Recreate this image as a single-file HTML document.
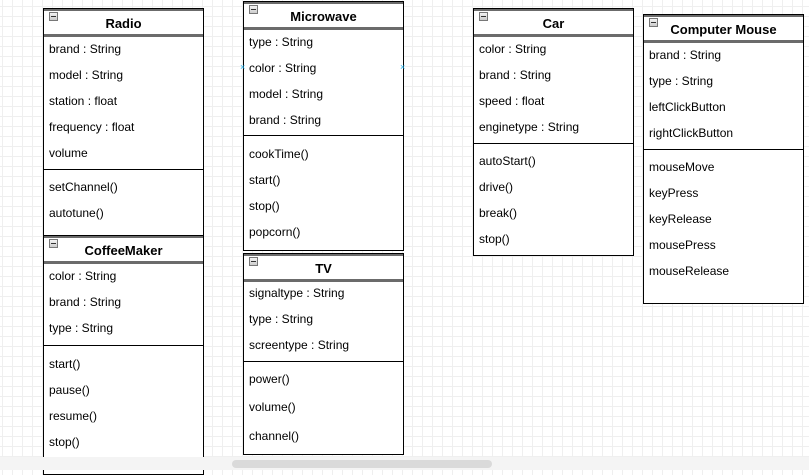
<!DOCTYPE html>
<html><head><style>
body{margin:0;width:809px;height:470px;overflow:hidden;position:relative;font-family:"Liberation Sans",Arial,sans-serif;
background-color:#fff;
background-image:linear-gradient(#efefef 1px,transparent 1px),linear-gradient(90deg,#efefef 1px,transparent 1px);
background-size:10px 10px;background-position:2px 6px;}
.b{position:absolute;background:#fff;border:1px solid #000;box-sizing:border-box}
.h{position:absolute;left:0;right:0;top:0;border-top:2px solid #6b6b6b;border-bottom:3px solid #6b6b6b;box-sizing:border-box;text-align:center;font-weight:bold;font-size:13px}
.m{position:absolute;left:5px;top:3px;width:7px;height:7px;border:1px solid #777;background:linear-gradient(#f4f4f4,#ccc)}
.m:after{content:"";position:absolute;left:1px;right:1px;top:3px;height:1px;background:#333}
.t{position:absolute;left:5px;font-size:12px;line-height:14px;color:#000;transform:translateY(-7px);white-space:nowrap}
.s{position:absolute;left:0;right:0;height:0;border-top:1px solid #000}
#sb{position:absolute;left:0;top:457px;width:809px;height:13px;background:#f4f4f4;z-index:10}
#th{position:absolute;left:232px;top:460px;width:260px;height:8px;border-radius:4px;background:#dadada;z-index:11}
.x{position:absolute;color:#29b6f2;font-size:9px;line-height:9px}
</style></head><body>

<div class="b" style="left:43px;top:8px;width:161px;height:230px">
<div class="h" style="height:28px;line-height:26px">Radio</div><div class="m"></div>
<div class="t" style="top:40px">brand : String</div>
<div class="t" style="top:66px">model : String</div>
<div class="t" style="top:92px">station : float</div>
<div class="t" style="top:118px">frequency : float</div>
<div class="t" style="top:144px">volume</div>
<div class="s" style="top:160px"></div>
<div class="t" style="top:178px">setChannel()</div>
<div class="t" style="top:204px">autotune()</div>
</div>

<div class="b" style="left:43px;top:235px;width:161px;height:240px">
<div class="h" style="height:28px;line-height:26px">CoffeeMaker</div><div class="m"></div>
<div class="t" style="top:40px">color : String</div>
<div class="t" style="top:66px">brand : String</div>
<div class="t" style="top:92px">type : String</div>
<div class="s" style="top:109px"></div>
<div class="t" style="top:128px">start()</div>
<div class="t" style="top:154px">pause()</div>
<div class="t" style="top:180px">resume()</div>
<div class="t" style="top:206px">stop()</div>
</div>

<div class="b" style="left:243px;top:1px;width:161px;height:250px">
<div class="h" style="height:28px;line-height:26px">Microwave</div><div class="m"></div>
<div class="t" style="top:40px">type : String</div>
<div class="t" style="top:66px">color : String</div>
<div class="t" style="top:92px">model : String</div>
<div class="t" style="top:118px">brand : String</div>
<div class="s" style="top:133px"></div>
<div class="t" style="top:152px">cookTime()</div>
<div class="t" style="top:178px">start()</div>
<div class="t" style="top:204px">stop()</div>
<div class="t" style="top:230px">popcorn()</div>
</div>
<div class="x" style="left:240px;top:63px">×</div>
<div class="x" style="left:400px;top:63px">×</div>

<div class="b" style="left:243px;top:253px;width:161px;height:202px">
<div class="h" style="height:28px;line-height:26px">TV</div><div class="m"></div>
<div class="t" style="top:39px">signaltype : String</div>
<div class="t" style="top:65px">type : String</div>
<div class="t" style="top:91px">screentype : String</div>
<div class="s" style="top:107px"></div>
<div class="t" style="top:125px">power()</div>
<div class="t" style="top:153px">volume()</div>
<div class="t" style="top:182px">channel()</div>
</div>

<div class="b" style="left:473px;top:8px;width:161px;height:248px">
<div class="h" style="height:28px;line-height:26px">Car</div><div class="m"></div>
<div class="t" style="top:40px">color : String</div>
<div class="t" style="top:66px">brand : String</div>
<div class="t" style="top:92px">speed : float</div>
<div class="t" style="top:118px">enginetype : String</div>
<div class="s" style="top:134px"></div>
<div class="t" style="top:152px">autoStart()</div>
<div class="t" style="top:178px">drive()</div>
<div class="t" style="top:204px">break()</div>
<div class="t" style="top:230px">stop()</div>
</div>

<div class="b" style="left:643px;top:14px;width:161px;height:290px">
<div class="h" style="height:28px;line-height:26px">Computer Mouse</div><div class="m"></div>
<div class="t" style="top:40px">brand : String</div>
<div class="t" style="top:66px">type : String</div>
<div class="t" style="top:92px">leftClickButton</div>
<div class="t" style="top:118px">rightClickButton</div>
<div class="s" style="top:134px"></div>
<div class="t" style="top:152px">mouseMove</div>
<div class="t" style="top:178px">keyPress</div>
<div class="t" style="top:204px">keyRelease</div>
<div class="t" style="top:230px">mousePress</div>
<div class="t" style="top:256px">mouseRelease</div>
</div>

<div id="sb"></div><div id="th"></div>
</body></html>
